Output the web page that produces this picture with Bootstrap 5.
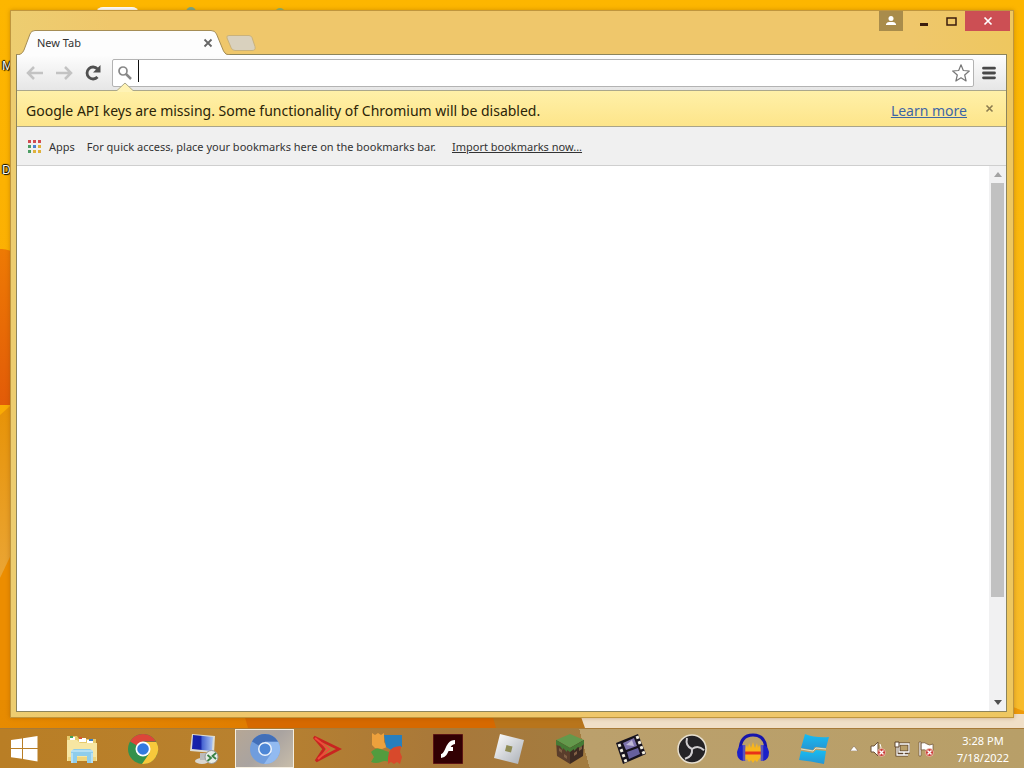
<!DOCTYPE html>
<html lang="en">
<head>
<meta charset="utf-8">
<meta name="viewport" content="width=device-width, initial-scale=1">
<title>New Tab</title>
<link href="https://cdn.jsdelivr.net/npm/bootstrap@5.3.0/dist/css/bootstrap.min.css" rel="stylesheet">
<style>
body{font-family:"Noto Sans","Open Sans",sans-serif;font-size:11px;line-height:16px;color:#333;background:#fdb400}
button{border:0;padding:0;background:none;color:inherit}
svg{display:block}
.wallpaper{inset:0;z-index:-1}
.desk-label{left:2px;font-size:12px;color:#fff;text-shadow:1px 1px 1px #000,-1px 0 1px #000,0 -1px 1px #000}
.label-a{top:58px}.label-b{top:162px}
.browser{margin:10px;padding:0 6px 5px 5px;background:linear-gradient(90deg,#edcd70,#efc76b 10%,#efc76b 90%,#eec75f);border:1px solid #c0963e;box-shadow:0 0 4px rgba(120,70,0,.35)}
.titlebar{height:43px}
.page-tab{width:214px;height:25px;margin-bottom:-1px;padding:0 17px 0 21px;z-index:2}
.new-tab{width:30px;height:16px;margin:0 0 3px -4px}
.account{width:24px;height:20px;margin-left:2px;background:#a98c4b}
.win-btn{width:27px;height:20px}
.win-close{width:45px;height:20px;margin-right:-3px;background:#cc4f54}
.client{border:1px solid #8c845c}
.toolbar{height:36px;padding:0 6px 0 8px;background:linear-gradient(#fdfdfd,#e6e6e6);border-bottom:1px solid #aaa78c}
.nav-btn{width:20px;height:20px;margin-right:9px}
.omnibox{height:28px;margin-right:8px;padding:0 3px 0 5px;background:#fff;border:1px solid #b3b3b3;border-radius:2px}
.omnibox input{border:0;outline:0;min-width:0;background:transparent;font-size:14px}
.caret{width:1px;height:22px;margin:0 4px 4px 6px;background:#111}
.infobar{height:36px;padding:4px 12px 0 9px;background:linear-gradient(#fff0a8,#fde58a);border-bottom:1px solid #a9a489;font-size:14px;line-height:20px;color:#2b2408}
.infobar a{color:#3e66a5}
.dismiss{margin-left:18px}
.notch{left:99px;top:-9px}
.bookmarks{height:39px;padding:1px 11px 0;background:#f0f0f0;border-bottom:1px solid #cfcfcf}
.bookmarks a{color:#333}
.newtab-page{background:#fff}
.scroller{width:17px;background:#f1f1f2;padding:0 2px}
.scroller button{height:17px;width:13px}
.scroll-thumb{height:81%;background:#c1c1c1}
.taskbar{height:40px;border-top:1px solid #a77a38;background:linear-gradient(75deg,transparent 57%,#bba06c 57%,#b89f68),linear-gradient(90deg,#b97e25,#b8812f 25%,#a8783a 44%,#a37c40 57%)}
.start{width:48px}
.apps{gap:2px;padding-left:4px}
.app-btn{width:59px;min-width:30px;height:39px;display:flex;align-items:center;justify-content:center}
.app-btn.current{background:linear-gradient(135deg,#b6a795,#a9a3a0 50%,#c8bdaa);border:1px solid #f5eee0}
.tray{gap:8px;color:#fff}
.clock{width:82px;line-height:17px}
</style>
<script src="https://cdn.jsdelivr.net/npm/bootstrap@5.3.0/dist/js/bootstrap.bundle.min.js"></script>
</head>
<body class="vh-100 d-flex flex-column overflow-hidden">
<main class="position-relative flex-grow-1 d-flex flex-column z-0">
  <svg class="wallpaper position-absolute w-100 h-100" viewBox="0 0 1024 728" preserveAspectRatio="none" aria-hidden="true">
    <defs>
      <linearGradient id="sky" x2="0" y2="1"><stop stop-color="#fdb600"/><stop offset=".5" stop-color="#fbae04"/><stop offset="1" stop-color="#ee9a0b"/></linearGradient>
      <linearGradient id="side" x2="0" y2="1"><stop stop-color="#fbb500"/><stop offset="1" stop-color="#f7bb2c"/></linearGradient>
      <linearGradient id="leaf" x2="0" y2="1"><stop stop-color="#ee7a04"/><stop offset="1" stop-color="#e25b08"/></linearGradient>
      <linearGradient id="band" x2="0" y2="1"><stop stop-color="#e79205"/><stop offset="1" stop-color="#eaa535"/></linearGradient>
      <linearGradient id="low"><stop stop-color="#e78b00"/><stop offset=".45" stop-color="#df7c00"/><stop offset="1" stop-color="#d86700"/></linearGradient>
    </defs>
    <path fill="url(#sky)" d="M0 0h1024v728H0z"/>
    <path fill="url(#leaf)" d="M0 249q8-1 18 6v150H0z"/>
    <path fill="url(#band)" d="M0 415l18-16v151L0 578z"/><path fill="#ec8d00" d="M0 578l18-38v188H0z"/>
    <path fill="url(#low)" d="M0 700h590v28H0z"/><path fill="#d66900" d="M244 714h252v14H248z"/>
    <path fill="#b8751c" d="M492 714h90l6 14h-92z"/><path fill="#f0dfc7" d="M580 714h444v14H585z"/>
    <path fill="url(#side)" d="M1010 10h14v701l-14-5z"/>
    <rect x="97" y="7" width="41" height="8" rx="6" fill="#fff"/><circle cx="191" cy="12" r="5" fill="#79a889"/><circle cx="280" cy="13" r="5" fill="#8ab16a"/>
  </svg>
  <span class="desk-label label-a position-absolute">M</span>
  <span class="desk-label label-b position-absolute">D</span>

  <section class="browser position-relative flex-grow-1 d-flex flex-column" aria-label="Browser window">
    <header class="titlebar d-flex">
      <div class="d-flex align-items-end flex-grow-1">
        <div class="page-tab position-relative d-flex align-items-center justify-content-between">
          <svg class="position-absolute top-0 start-0" width="214" height="25" viewBox="0 0 214 25" aria-hidden="true"><path d="M0 25q6 0 8-5L14 4q1-3.500 5-3.500h176q4 0 5.500 3.500l7 17q1.500 4 6.500 4" fill="#fdfdfd" stroke="#a58d55"/></svg>
          <span class="position-relative">New Tab</span>
          <button class="position-relative" aria-label="Close tab"><svg width="10" height="10" viewBox="0 0 10 10"><path d="M1.500 1.500l7 7m0-7l-7 7" stroke="#666" stroke-width="1.800"/></svg></button>
        </div>
        <button class="new-tab position-relative" aria-label="Open a new tab"><svg width="30" height="16" viewBox="0 0 30 16"><path d="M3 .5h20q2 0 3 2l3 9q1 4-3 4H9q-3 0-4-3L1 3Q0 .5 3 .5z" fill="#d9d1be" stroke="#c9b27c"/></svg></button>
      </div>
      <div class="d-flex align-items-start">
        <button class="account d-flex align-items-center justify-content-center" aria-label="Account"><svg width="10" height="10" viewBox="0 0 10 10" fill="#fff"><circle cx="5" cy="2.500" r="2.500"/><path d="M0 9V8q1-2 3-2h4q2 0 3 2v1z"/></svg></button>
        <button class="win-btn ms-2 px-2 pt-1" aria-label="Minimize"><svg width="10" height="10" viewBox="0 0 10 10"><path d="M1 5h8v3H1z" fill="#3b1d0e"/></svg></button>
        <button class="win-btn px-2" aria-label="Maximize"><svg width="11" height="10" viewBox="0 0 11 10"><path d="M1 2h9v7H1z" fill="none" stroke="#3b1d0e" stroke-width="1.500"/></svg></button>
        <button class="win-close d-flex align-items-center justify-content-center" aria-label="Close"><svg width="10" height="10" viewBox="0 0 10 10"><path d="M1.500 1.500l7 7m0-7l-7 7" stroke="#fff" stroke-width="1.700"/></svg></button>
      </div>
    </header>
    <div class="client flex-grow-1 d-flex flex-column">
      <div class="toolbar d-flex align-items-center">
        <button class="nav-btn" aria-label="Back"><svg width="20" height="20" viewBox="0 0 20 20" fill="none" stroke="#c3c3c3" stroke-width="2.500"><path d="M9 4l-6 6 6 6M3 10h15"/></svg></button>
        <button class="nav-btn" aria-label="Forward"><svg width="20" height="20" viewBox="0 0 20 20" fill="none" stroke="#c3c3c3" stroke-width="2.500"><path d="M11 4l6 6-6 6M17 10H2"/></svg></button>
        <button class="nav-btn" aria-label="Reload"><svg width="20" height="20" viewBox="0 0 20 20"><path d="M14.500 14a6 6 0 1 1 0-8" fill="none" stroke="#505050" stroke-width="2.800"/><path d="M17.500 2v7.500H10z" fill="#505050"/></svg></button>
        <div class="omnibox d-flex align-items-center flex-grow-1">
          <svg width="14" height="14" viewBox="0 0 14 14" fill="none" stroke="#888"><circle cx="5" cy="5" r="4" stroke-width="1.700"/><path d="M8 8l5 5" stroke-width="2.500"/></svg>
          <span class="caret"></span>
          <input class="flex-grow-1" type="text" aria-label="Address and search bar">
          <button aria-label="Bookmark this page"><svg width="18" height="18" viewBox="0 0 18 18"><path d="M9 .8l2.300 5.700 6 .5-4.600 4 1.400 6L9 13.800 3.900 17l1.400-6L.7 7l6-.5z" fill="#fff" stroke="#777" stroke-linejoin="round" stroke-width="1.200"/></svg></button>
        </div>
        <button class="me-1" aria-label="Menu"><svg width="14" height="14" viewBox="0 0 14 14"><path d="M1.500 2.200h11M1.500 7h11M1.500 11.800h11" stroke="#484848" stroke-width="2.800" stroke-linecap="round"/></svg></button>
      </div>
      <div class="infobar position-relative d-flex align-items-center" role="status">
        <svg class="notch position-absolute" width="18" height="10" viewBox="0 0 18 10" aria-hidden="true"><path d="M0 9l9-8 9 8v1H0z" fill="#fff3b5"/><path d="M0 8.500h1L9 1l8 7.500h1" fill="none" stroke="#aaa78c"/></svg>
        <span class="flex-grow-1">Google API keys are missing. Some functionality of Chromium will be disabled.</span>
        <a href="#">Learn more</a>
        <button class="dismiss pb-1" aria-label="Dismiss"><svg width="9" height="9" viewBox="0 0 9 9"><path d="M1.500 1.500l6 6m0-6l-6 6" stroke="#8b7c50" stroke-width="1.600"/></svg></button>
      </div>
      <nav class="bookmarks d-flex align-items-center" aria-label="Bookmarks">
        <a class="d-flex align-items-center text-decoration-none" href="#"><svg class="me-2" width="13" height="13" viewBox="0 0 13 13"><path fill="#d14b50" d="M0 0h3v3H0zM5 0h3v3H5zM10 0h3v3h-3z"/><path fill="#4c9d63" d="M0 5h3v3H0zM0 10h3v3H0z"/><path fill="#4a80cf" d="M5 5h3v3H5z"/><path fill="#e0b13c" d="M10 5h3v3h-3zM5 10h3v3H5zM10 10h3v3h-3z"/></svg>Apps</a>
        <span class="ms-2 ps-1 me-3">For quick access, place your bookmarks here on the bookmarks bar.</span>
        <a href="#">Import bookmarks now...</a>
      </nav>
      <div class="newtab-page flex-grow-1 d-flex justify-content-end">
        <div class="scroller d-flex flex-column" aria-label="Scrollbar">
          <button class="d-flex align-items-center justify-content-center" aria-label="Scroll up"><svg width="8" height="5" viewBox="0 0 8 5"><path d="M0 5l4-5 4 5z" fill="#a3a3a3"/></svg></button>
          <div class="flex-grow-1"><div class="scroll-thumb"></div></div>
          <button class="d-flex align-items-center justify-content-center" aria-label="Scroll down"><svg width="8" height="5" viewBox="0 0 8 5"><path d="M0 0l4 5 4-5z" fill="#505050"/></svg></button>
        </div>
      </div>
    </div>
  </section>
</main>

<footer class="taskbar d-flex align-items-center flex-shrink-0">
  <button class="start d-flex justify-content-center" aria-label="Start"><svg width="28" height="26" viewBox="0 0 28 26" fill="#fff"><path d="M1 4l11-1.500V12H1zM13 2.300L27.500 0v12H13zM1 13h11v9.800L1 21.300zM13 13h14.500v12.500L13 23z"/></svg></button>
  <div class="apps d-flex flex-grow-1">
    <button class="app-btn" aria-label="File Explorer"><svg width="32" height="32" viewBox="0 0 32 32"><path fill="#e6ca6c" d="M1 3h10l2 3h17v20H1z"/><path fill="#fff" d="M4 4h5v3H4zM13 5h7v4h-7zM21 7h6v3h-6z"/><path fill="#42a35b" d="M4 3h3v2H4z"/><path fill="#d95730" d="M13 4h3v2h-3z"/><path fill="#3e7dbd" d="M23 6h4v2h-4z"/><path fill="#f7e6a2" d="M1 7h10l3 3h17v18H1z"/><path fill="#efd57f" d="M2 24h28v4H2z"/><path fill="#8fcdec" d="M5 18l3-2h16l3 2v12h-6v-7H11v7H5z"/><path d="M5 18h22M6 20v10M26 20v10" stroke="#d9f1fb"/></svg></button>
    <button class="app-btn" aria-label="Google Chrome"><svg width="32" height="32" viewBox="0 0 32 32"><circle cx="16" cy="16" r="15" fill="#34914c"/><path fill="#dd4639" d="M16 16L3 8.500A15 15 0 0 1 29 8.500H16z"/><path fill="#f7c83b" d="M16 9h13.300A15 15 0 0 1 15 31l7.500-11z"/><circle cx="16" cy="16" r="7.500" fill="#fff"/><circle cx="16" cy="16" r="5.800" fill="#337ae0"/></svg></button>
    <button class="app-btn" aria-label="Remote Desktop"><svg width="32" height="32" viewBox="0 0 32 32"><defs><linearGradient id="scr" x2="1"><stop stop-color="#1723ae"/><stop offset=".4" stop-color="#1420a5"/><stop offset=".5" stop-color="#4966d3"/><stop offset="1" stop-color="#aac5f3"/></linearGradient></defs><ellipse cx="14" cy="28" rx="7" ry="3" fill="#d9d7d0"/><path fill="#bbb" d="M12 20h6v7h-6z"/><path fill="#dddcd3" d="M4 1l23 2-1 17-24-2z"/><path fill="url(#scr)" d="M5 2l20 2-1 14-20-2z"/><circle cx="23.500" cy="24" r="6.500" fill="#e7ece7" stroke="#999"/><path d="M19.500 22l3.500 3-3.500 3M28 20l-3.500 3 3.500 3" fill="none" stroke="#398244" stroke-width="1.800"/></svg></button>
    <button class="app-btn current" aria-label="Chromium"><svg width="32" height="32" viewBox="0 0 32 32"><circle cx="16" cy="16" r="15" fill="#709ddd"/><path fill="#426fb8" d="M16 16L3 8.500A15 15 0 0 1 29 8.500H16z"/><path fill="#92baf0" d="M16 9h13.300A15 15 0 0 1 15 31l7.500-11z"/><circle cx="16" cy="16" r="7" fill="#eef4fb"/><circle cx="16" cy="16" r="5.500" fill="#4e87d6"/></svg></button>
    <button class="app-btn" aria-label="Arrow app"><svg width="32" height="32" viewBox="0 0 32 32"><path d="M4 4l25 12L6 28l8-12z" fill="none" stroke="#c92420" stroke-width="2.800"/><path d="M5 5l14 11L8 26" fill="none" stroke="#f04a3b" stroke-width="2"/></svg></button>
    <button class="app-btn" aria-label="Puzzle app"><svg width="32" height="32" viewBox="0 0 32 32"><path fill="#eda13d" d="M1 0l3 2 3-2 3 2 3-2v9l3 5-5 2-7-1-3-3z"/><path fill="#287fbd" d="M13 2h18v12q-7-1-9 4l-7-4z"/><path fill="#529c3e" d="M0 19q5-5 9-3l9 3v10q-4-2-8 0-5 2-10 0l3-5z"/><path fill="#d8492b" d="M18 19q3-6 12-6l-1 6 2 5-2 7-3-2-3 2-3-2-3 2v-6z"/></svg></button>
    <button class="app-btn" aria-label="Flash Player"><svg width="30" height="30" viewBox="0 0 30 30"><path fill="#320003" stroke="#5c1413" d="M.5 .5h29v29H.5z"/><path d="M8 22c7 0 5-14 14-14M13 15h7" fill="none" stroke="#fff" stroke-width="4"/></svg></button>
    <button class="app-btn" aria-label="Roblox"><svg width="32" height="32" viewBox="0 0 32 32"><defs><linearGradient id="rbx" x2="1" y2="1"><stop stop-color="#fff"/><stop offset="1" stop-color="#a9aeb5"/></linearGradient></defs><path fill="url(#rbx)" d="M7 1l24 6-6 24-24-6z"/><path fill="#908c54" d="M13.500 12l6 1.500-1.500 6-6-1.500z"/></svg></button>
    <button class="app-btn" aria-label="Minecraft"><svg width="32" height="32" viewBox="0 0 32 32"><path fill="#64994c" d="M16 1l14 6-14 8L2 7z"/><path fill="#5a3d2b" d="M2 7l14 8v16L3 23z"/><path fill="#3e2b22" d="M30 7l-14 8v16l13-8z"/><path fill="#467b35" d="M2 7l14 8v4l-3-2v2l-4-4v2l-3-4-4-1zM30 7l-14 8v4l4-3v2l4-4 2 1 4-4z"/><path fill="#826045" d="M5 15l3 2v3l-3-2zM10 21l3 2v3l-3-2zM20 20l3-2v3l-3 2zM25 15l3-2v3l-3 2z"/></svg></button>
    <button class="app-btn" aria-label="Video editor"><svg width="32" height="32" viewBox="0 0 32 32"><path fill="#16121d" d="M1 10L23 1l8 20-23 10z"/><path fill="#7d73ad" d="M8 10l11-5 3 8-11 4z"/><path fill="#66609d" d="M12 19l11-4 2 6-11 5z"/><path fill="#bfb9d5" d="M11 12l6-5 2 6z"/><path d="M4 11l7 18M22 3l7 18" stroke="#f1eddf" stroke-width="3" stroke-dasharray="3 2.500"/></svg></button>
    <button class="app-btn" aria-label="OBS Studio"><svg width="32" height="32" viewBox="0 0 32 32"><circle cx="16" cy="16" r="14" fill="#242226" stroke="#e7dfcf" stroke-width="1.500"/><g fill="none" stroke="#d0cdd0" stroke-width="2"><path d="M16 16Q9 13 11 5"/><path d="M16 16Q9 13 11 5" transform="rotate(120 16 16)"/><path d="M16 16Q9 13 11 5" transform="rotate(240 16 16)"/></g></svg></button>
    <button class="app-btn" aria-label="Audacity"><svg width="34" height="32" viewBox="0 0 34 32"><path d="M4 18Q4 2 17 2t13 16" fill="none" stroke="#1715ac" stroke-width="3"/><path fill="#f7b51d" d="M9 16l2-4 1 3 1-5 2 5 2-6 2 6 2-5 1 5 1-3 2 4v8l-2 2-2 3-2-2-2 3-2-3-2 2-2-3-2 1z"/><path d="M9 20h16" stroke="#e83219" stroke-width="3"/><path fill="#1b20c9" d="M7 12v16q-6-1-6-9 1-6 6-7zM27 12v16q6-1 6-9-1-6-6-7z"/><path d="M8 12v16M26 12v16" stroke="#5a54ba" stroke-width="2.500"/></svg></button>
    <button class="app-btn" aria-label="Roblox Studio"><svg width="32" height="32" viewBox="0 0 32 32"><defs><linearGradient id="stu" x2="0" y2="1"><stop stop-color="#16bdf3"/><stop offset="1" stop-color="#2795d2"/></linearGradient></defs><path fill="url(#stu)" d="M7 1q10 4 24 3l-3 11-11-1-2 3L3 15z"/><path fill="url(#stu)" d="M3 18l12 2 3-3 10 1-2 13Q12 28 1 27z"/><path fill="none" stroke="#dae0cc" d="M3 16l12 2 3-3 10 1"/></svg></button>
  </div>
  <div class="tray d-flex align-items-center flex-shrink-0">
    <button class="me-1" aria-label="Show hidden icons"><svg width="8" height="5" viewBox="0 0 8 5"><path d="M0 5l4-5 4 5z" fill="#fff" stroke="#715b45" stroke-width=".5"/></svg></button>
    <button aria-label="Volume muted"><svg width="16" height="16" viewBox="0 0 16 16"><path d="M1 5h3l4-4v14l-4-4H1z" fill="#fff" stroke="#6b5036"/><path d="M10 3q2 3 0 7" fill="none" stroke="#fff"/><circle cx="11.500" cy="11.500" r="4" fill="#cb403c" stroke="#f2d4bd" stroke-width=".7"/><path d="M9.500 9.500l4 4m0-4l-4 4" stroke="#fff" stroke-width="1.400"/></svg></button>
    <button aria-label="Network"><svg width="16" height="16" viewBox="0 0 16 16"><path d="M5 3h10v8H5zM10 11v3M6 14h8M3 6v8h5" fill="none" stroke="#5e452d" stroke-width="3"/><path d="M5 3h10v8H5zM10 11v3M6 14h8M3 6v8h4" fill="none" stroke="#fff" stroke-width="1.300"/><path d="M1 1h4v5H1z" fill="#fff" stroke="#5e452d"/></svg></button>
    <button aria-label="Action Center"><svg width="16" height="16" viewBox="0 0 16 16"><path d="M1 1h2v14H1zM3 2q4-1 6 1t6 0v7q-4 2-6 0T3 9z" fill="#fff" stroke="#6b5036" stroke-width=".7"/><circle cx="11.500" cy="11.500" r="4" fill="#cb403c" stroke="#f2d4bd" stroke-width=".7"/><path d="M9.500 9.500l4 4m0-4l-4 4" stroke="#fff" stroke-width="1.400"/></svg></button>
    <div class="clock text-center">3:28 PM<br>7/18/2022</div>
  </div>
</footer>
</body>
</html>
